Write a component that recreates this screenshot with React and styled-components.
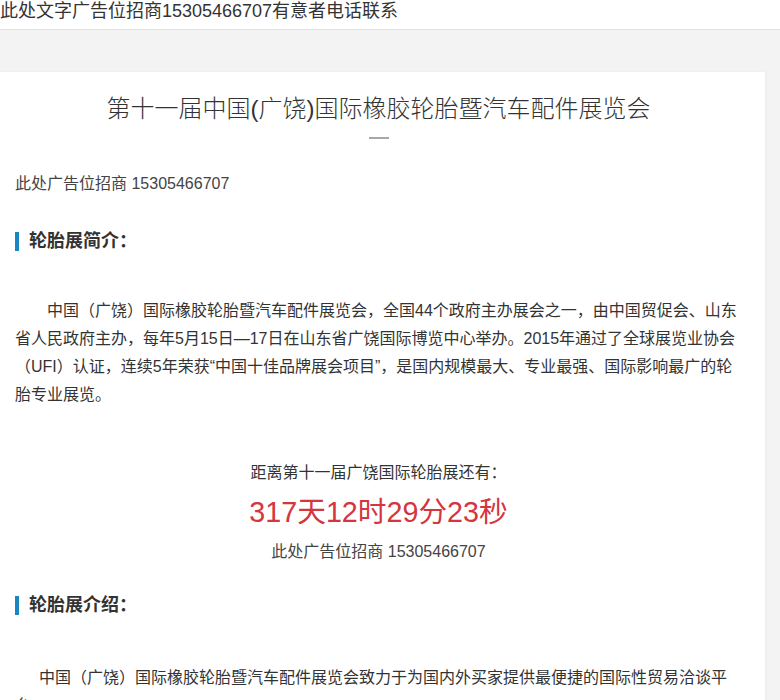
import styled, { createGlobalStyle } from "styled-components"

const GlobalStyle = createGlobalStyle`
  html, body {
    margin: 0;
    padding: 0;
    background: #f3f3f3;
    font-family: "Liberation Sans", "Noto Sans CJK SC", sans-serif;
    color: #333;
  }
`

function App() {
  return (
    <Page>
      <GlobalStyle />
      <TopBar>此处文字广告位招商15305466707有意者电话联系</TopBar>
      <Main>
        <Card>
          <Title>第十一届中国(广饶)国际橡胶轮胎暨汽车配件展览会</Title>
          <Dash />
          <AdLine>此处广告位招商 15305466707</AdLine>

          <Heading top={37}>轮胎展简介：</Heading>
          <Para indent={32} top={45}>
            中国（广饶）国际橡胶轮胎暨汽车配件展览会，全国44个政府主办展会之一，由中国贸促会、山东省人民政府主办，每年5月15日—17日在山东省广饶国际博览中心举办。2015年通过了全球展览业协会（UFI）认证，连续5年荣获“中国十佳品牌展会项目”，是国内规模最大、专业最强、国际影响最广的轮胎专业展览。
          </Para>

          <Countdown>
            <CountLabel>距离第十一届广饶国际轮胎展还有：</CountLabel>
            <CountValue>317天12时29分23秒</CountValue>
            <CountAd>此处广告位招商 15305466707</CountAd>
          </Countdown>

          <Heading top={33}>轮胎展介绍：</Heading>
          <Para indent={24} top={48}>
            中国（广饶）国际橡胶轮胎暨汽车配件展览会致力于为国内外买家提供最便捷的国际性贸易洽谈平台。
          </Para>
        </Card>
      </Main>
    </Page>
  )
}

export default App

const Page = styled.div`
  width: 780px;
  height: 700px;
  overflow: hidden;
`

const TopBar = styled.div`
  height: 29px;
  line-height: 22px;
  font-size: 18px;
  color: #333;
  background: #fff;
  border-bottom: 1px solid #e3e3e3;
  white-space: nowrap;
  overflow: hidden;
`

const Main = styled.div`
  padding: 42px 15px 0 0;
`

const Card = styled.div`
  background: #fff;
  padding: 22px 23px 40px 15px;
  min-height: 700px;
  box-shadow: 1px 0 2px rgba(0, 0, 0, 0.04);
`

const Title = styled.h1`
  margin: 0;
  text-align: center;
  font-size: 24px;
  font-weight: 300;
  line-height: 30px;
  color: #333;
`

const Dash = styled.div`
  width: 20px;
  height: 2px;
  background: #a8a8a8;
  margin: 13px auto 0;
`

const AdLine = styled.p`
  margin: 36px 0 0;
  font-size: 16px;
  line-height: 18px;
  color: #444;
`

const Heading = styled.h3`
  margin: ${(p) => p.top}px 0 0;
  display: flex;
  align-items: center;
  gap: 10px;
  font-size: 18px;
  font-weight: 700;
  line-height: 22px;
  color: #333;

  &::before {
    content: "";
    width: 4px;
    height: 19px;
    background: #1a86c0;
  }
`

const Para = styled.p`
  margin: ${(p) => p.top}px 0 0;
  font-size: 16px;
  line-height: 28px;
  text-indent: ${(p) => p.indent}px;
  color: #333;
`

const Countdown = styled.div`
  margin-top: 54px;
  display: flex;
  flex-direction: column;
  align-items: center;
  text-align: center;
`

const CountLabel = styled.div`
  font-size: 16px;
  line-height: 20px;
  color: #333;
`

const CountValue = styled.div`
  margin-top: 9px;
  font-size: 28.7px;
  line-height: 40px;
  color: #d5353d;
`

const CountAd = styled.div`
  margin-top: 11px;
  font-size: 16px;
  line-height: 18px;
  color: #444;
`
